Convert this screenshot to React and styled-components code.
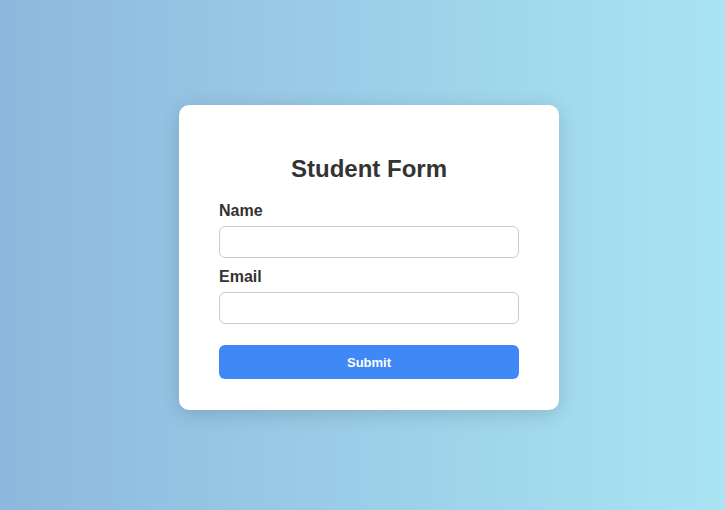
import React from 'react'
import styled, { createGlobalStyle } from 'styled-components'

const Global = createGlobalStyle`
  html, body {
    margin: 0;
    padding: 0;
  }
  body {
    font-family: "Liberation Sans", Arial, sans-serif;
    color: #333;
  }
`

const Page = styled.div`
  min-height: 100vh;
  box-sizing: border-box;
  padding: 5px 0 0 13px;
  display: flex;
  align-items: center;
  justify-content: center;
  background: linear-gradient(to right, #8db8dd, #a9e4f3);
`

const Card = styled.form`
  width: 380px;
  box-sizing: border-box;
  padding: 30px 40px 31px;
  background: #fff;
  border-radius: 10px;
  box-shadow: 0 4px 20px rgba(0, 0, 0, 0.15);
  display: flex;
  flex-direction: column;
`

const Title = styled.h2`
  margin: 20px 0 19px;
  font-size: 24px;
  line-height: 28px;
  font-weight: bold;
  text-align: center;
  color: #333;
`

const Label = styled.label`
  font-size: 16px;
  line-height: 18px;
  font-weight: bold;
  color: #333;
  margin-top: ${p => (p.first ? '0' : '10px')};
  margin-bottom: 6px;
`

const Input = styled.input`
  height: 32px;
  box-sizing: border-box;
  width: 100%;
  border: 1px solid #ccc;
  border-radius: 6px;
  padding: 0 10px;
  font-size: 14px;
  font-family: inherit;
  outline: none;
`

const Button = styled.button`
  margin-top: 21px;
  height: 34px;
  width: 100%;
  border: none;
  border-radius: 6px;
  background: #4088f5;
  color: #fff;
  font-family: "Liberation Sans", Arial, sans-serif;
  font-weight: bold;
  font-size: 13px;
  cursor: pointer;
`

export default function App() {
  return (
    <Page>
      <Global />
      <Card onSubmit={e => e.preventDefault()}>
        <Title>Student Form</Title>
        <Label first>Name</Label>
        <Input type="text" />
        <Label>Email</Label>
        <Input type="email" />
        <Button type="submit">Submit</Button>
      </Card>
    </Page>
  )
}
